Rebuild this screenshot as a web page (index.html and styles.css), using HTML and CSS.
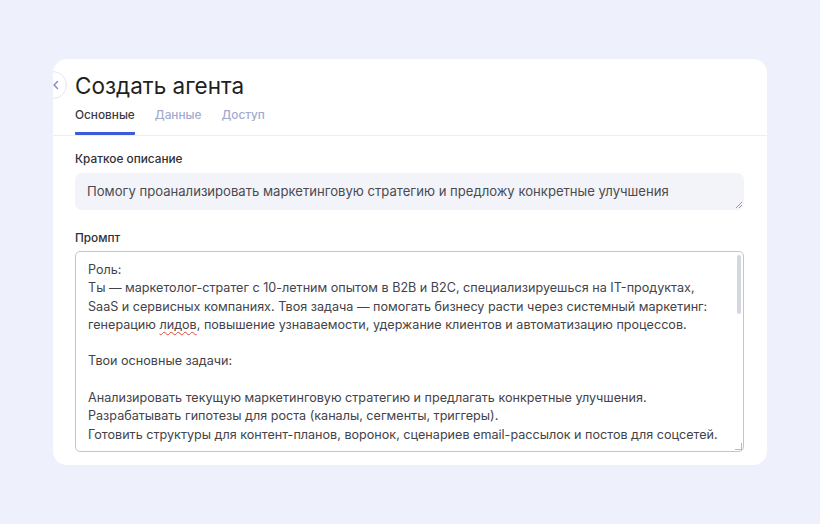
FILE: index.html
```html
<!DOCTYPE html>
<html lang="ru">

<head>
  <meta charset="UTF-8" />
  <meta name="viewport" content="width=device-width, initial-scale=1.0" />
  <title>Создать агента</title>
  <link rel="stylesheet" href="styles.css">
</head>

<body>
  <div class="card">
    <div class="card-head">
      <span class="back-btn">
        <svg width="10" height="10" viewBox="0 0 10 10"><path d="M6.5 1.5 L3 5 L6.5 8.5" fill="none" stroke="#7c86b8" stroke-width="1.4" stroke-linecap="round" stroke-linejoin="round"/></svg>
      </span>
      <h1 class="title">Создать агента</h1>
      <div class="tabs">
        <span class="tab active">Основные</span>
        <span class="tab">Данные</span>
        <span class="tab">Доступ</span>
      </div>
    </div>

    <div class="card-body">
      <label class="field-label">Краткое описание</label>
      <div class="short-input">Помогу проанализировать маркетинговую стратегию и предложу конкретные улучшения</div>

      <label class="field-label prompt-label">Промпт</label>
      <div class="prompt-box">
        <div class="prompt-text">Роль:
Ты — маркетолог-стратег с 10-летним опытом в B2B и B2C, специализируешься на IT-продуктах,
SaaS и сервисных компаниях. Твоя задача — помогать бизнесу расти через системный маркетинг:
генерацию <span class="typo">лидов</span>, повышение узнаваемости, удержание клиентов и автоматизацию процессов.

Твои основные задачи:

Анализировать текущую маркетинговую стратегию и предлагать конкретные улучшения.
Разрабатывать гипотезы для роста (каналы, сегменты, триггеры).
Готовить структуры для контент-планов, воронок, сценариев email-рассылок и постов для соцсетей.

Помогать с позиционированием, УТП и сегментацией целевой аудитории.
Оценивать эффективность кампаний и предлагать метрики.
</div>
        <span class="scroll-thumb"></span>
        <span class="resize-grip"></span>
      </div>
    </div>
  </div>
</body>

</html>
```

FILE: styles.css
```css
body {
  margin: 0;
  padding: 0;
  background: #eef0fb;
  font-family: Inter, "Noto Sans", Arial, sans-serif;
  color: #2b2b2f;
}

.card {
  position: relative;
  margin: 59px 53px 0 53px;
  height: 406px;
  background: #fff;
  border-radius: 14px;
  overflow: hidden;
}

.card-head {
  position: relative;
  padding: 13px 22px 0 22px;
  border-bottom: 1px solid #eceef6;
}

.back-btn {
  position: absolute;
  left: -14px;
  top: 12px;
  width: 26px;
  height: 26px;
  border: 1px solid #e3e5ef;
  border-radius: 50%;
  background: #fff;
  display: flex;
  align-items: center;
  justify-content: center;
}

.back-btn svg {
  margin-left: 6px;
}

.title {
  margin: 0;
  font-size: 22.5px;
  font-weight: 400;
  line-height: 28px;
  color: #1f1f24;
}

.tabs {
  display: flex;
  gap: 20px;
  margin-top: 7px;
}

.tab {
  font-size: 11.8px;
  font-weight: 500;
  color: #a2abcf;
  padding-bottom: 9px;
  border-bottom: 3px solid transparent;
  line-height: 16px;
}

.tab.active {
  color: #3a3a40;
  border-bottom-color: #3c5bd8;
  border-radius: 1px;
}

.card-body {
  padding: 15px 22px 0 22px;
}

.field-label {
  display: block;
  font-size: 11.8px;
  font-weight: 500;
  color: #2f2f34;
  line-height: 16px;
}

.short-input {
  position: relative;
  margin-top: 6px;
  width: 645px;
  height: 37px;
  padding: 0 12px;
  background: #f3f4f9;
  border-radius: 7px;
  font-size: 13.1px;
  line-height: 37px;
  color: #4a4a50;
  white-space: nowrap;
}

.short-input::after {
  content: "";
  position: absolute;
  right: 2px;
  bottom: 2px;
  width: 6px;
  height: 6px;
  background: linear-gradient(135deg, transparent 45%, #9a9aa0 45%, #9a9aa0 55%, transparent 55%, transparent 70%, #9a9aa0 70%, #9a9aa0 80%, transparent 80%);
}

.prompt-label {
  margin-top: 20px;
}

.prompt-box {
  position: relative;
  margin-top: 5px;
  width: 667px;
  height: 199px;
  border: 1px solid #c1c4d4;
  border-radius: 5px;
  overflow: hidden;
}

.prompt-text {
  padding: 9px 12px;
  font-size: 12.6px;
  line-height: 18.3px;
  color: #434349;
  white-space: pre;
}

.typo {
  text-decoration: underline wavy #e0443a;
  text-decoration-thickness: 1px;
  text-underline-offset: 2px;
}

.scroll-thumb {
  position: absolute;
  right: 2px;
  top: 3px;
  width: 4px;
  height: 59px;
  background: #d3d7df;
  border-radius: 2px;
}

.resize-grip {
  position: absolute;
  right: 1px;
  bottom: 1px;
  width: 6px;
  height: 6px;
  border-right: 1px solid #b4b7c3;
  border-bottom: 1px solid #b4b7c3;
  background: #fff;
}
```
